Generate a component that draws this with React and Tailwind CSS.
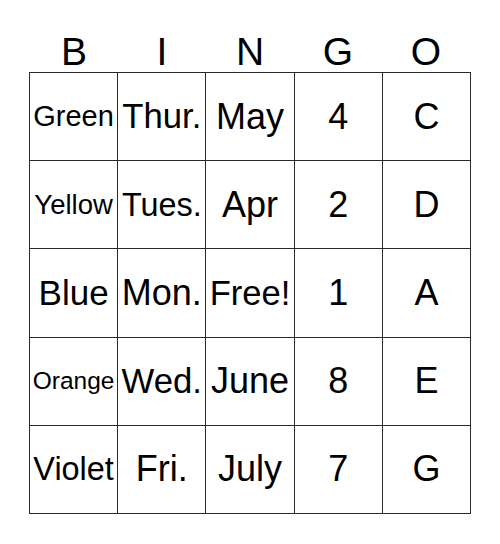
const letters = ["B", "I", "N", "G", "O"];

const rows = [
  [
    { t: "Green", s: "text-[29px]" },
    { t: "Thur.", s: "text-[34.7px]" },
    { t: "May" },
    { t: "4" },
    { t: "C" },
  ],
  [
    { t: "Yellow", s: "text-[27.5px]" },
    { t: "Tues.", s: "text-[32.4px]" },
    { t: "Apr" },
    { t: "2" },
    { t: "D" },
  ],
  [
    { t: "Blue", s: "text-[35px]" },
    { t: "Mon." },
    { t: "Free!", s: "text-[34.6px]" },
    { t: "1" },
    { t: "A" },
  ],
  [
    { t: "Orange", s: "text-[24.5px]" },
    { t: "Wed.", s: "text-[34.7px]" },
    { t: "June" },
    { t: "8" },
    { t: "E" },
  ],
  [
    { t: "Violet", s: "text-[32.4px]" },
    { t: "Fri." },
    { t: "July" },
    { t: "7" },
    { t: "G" },
  ],
];

export default function App() {
  return (
    <div className="w-[500px] h-[544px] bg-white text-black font-['Liberation_Sans',Arial,sans-serif]">
      <div className="mx-auto w-[442px]">
        <div className="grid grid-cols-5 pt-[32px] px-px">
          {letters.map((l) => (
            <div key={l} className="h-[40px] text-center text-[39px] leading-none">
              {l}
            </div>
          ))}
        </div>

        <div className="grid grid-cols-5 grid-rows-5 gap-px bg-[#2a2a2a] p-px h-[442px]">
          {rows.flat().map((c, i) => (
            <div
              key={i}
              className={`flex items-center justify-center bg-white whitespace-nowrap leading-none ${c.s || "text-[36px]"}`}
            >
              {c.t}
            </div>
          ))}
        </div>
      </div>
    </div>
  );
}
